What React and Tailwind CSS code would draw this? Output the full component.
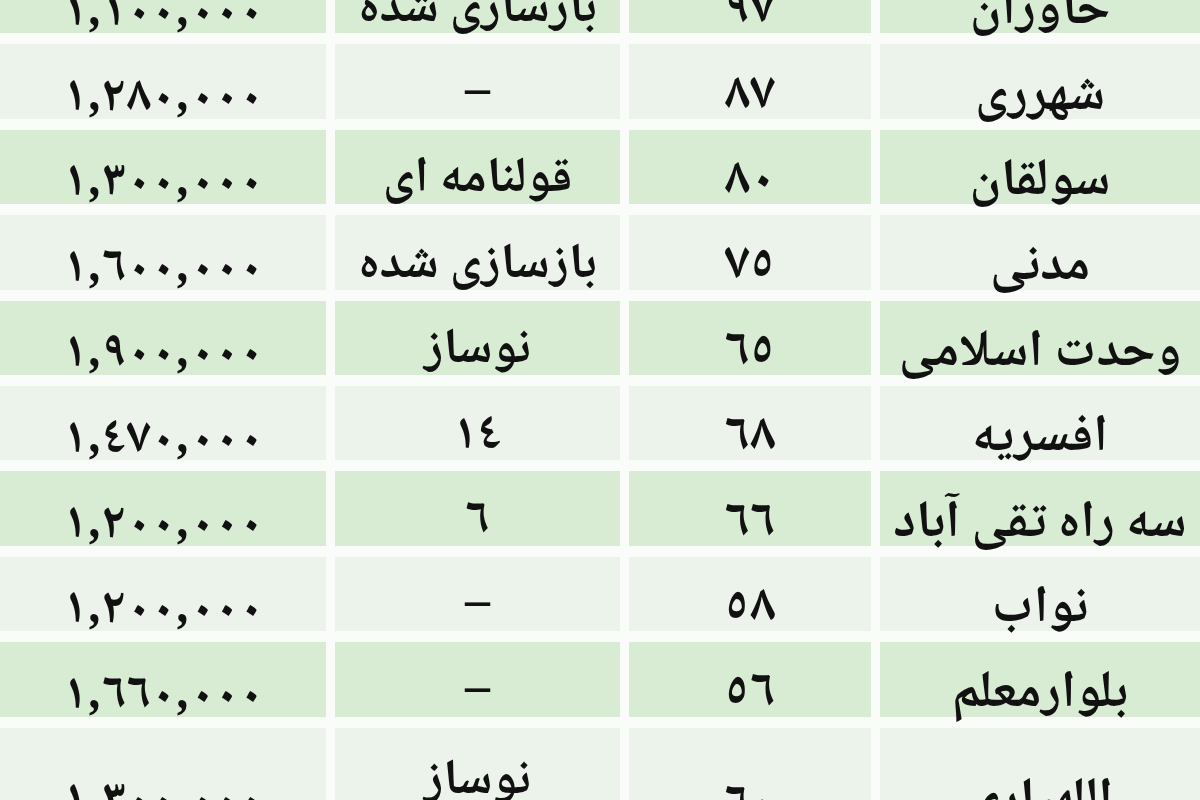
import React from "react";

const rows = [
  ["١,١٠٠,٠٠٠", "بازسازی شده", "٩٧", "خاوران"],
  ["١,٢٨٠,٠٠٠", "–", "٨٧", "شهرری"],
  ["١,٣٠٠,٠٠٠", "قولنامه ای", "٨٠", "سولقان"],
  ["١,٦٠٠,٠٠٠", "بازسازی شده", "٧٥", "مدنی"],
  ["١,٩٠٠,٠٠٠", "نوساز", "٦٥", "وحدت اسلامی"],
  ["١,٤٧٠,٠٠٠", "١٤", "٦٨", "افسریه"],
  ["١,٢٠٠,٠٠٠", "٦", "٦٦", "سه راه تقی آباد"],
  ["١,٢٠٠,٠٠٠", "–", "٥٨", "نواب"],
  ["١,٦٦٠,٠٠٠", "–", "٥٦", "بلوارمعلم"],
];

function Cell({ children, green, w, dir = "rtl" }) {
  return (
    <div
      dir={dir}
      className={`${w} h-full shrink-0 flex items-center justify-center whitespace-nowrap ${
        green ? "bg-[#d8ecd4]" : "bg-[#ecf3eb]"
      }`}
    >
      {children}
    </div>
  );
}

export default function App() {
  return (
    <div
      className="w-[1200px] h-[800px] overflow-hidden bg-[#fafcf9] text-[#111111] font-bold"
      style={{ fontFamily: '"Noto Naskh Arabic", "Noto Sans Arabic", "DejaVu Sans", sans-serif' }}
    >
      <div className="-mt-[41px] flex flex-col gap-[11px]">
        {rows.map((r, i) => {
          const green = i % 2 === 0;
          return (
            <div key={i} className="flex gap-[9px] h-[74.4px]">
              <Cell green={green} w="w-[326px]" dir="ltr">
                <span className="text-[50px] tracking-[8px] translate-y-[18px]">{r[0]}</span>
              </Cell>
              <Cell green={green} w="w-[285px]">
                <span className="text-[50px] translate-y-[14px]">{r[1]}</span>
              </Cell>
              <Cell green={green} w="w-[242px]" dir="ltr">
                <span className="text-[52px] translate-y-[15px]">{r[2]}</span>
              </Cell>
              <Cell green={green} w="w-[320px]">
                <span className="text-[52px] translate-y-[16px]">{r[3]}</span>
              </Cell>
            </div>
          );
        })}
        <div className="flex gap-[9px] h-[160px]">
          <Cell green={false} w="w-[326px]" dir="ltr">
            <span className="text-[50px] tracking-[8px] -translate-y-[4px]">١,٣٠٠,٠٠٠</span>
          </Cell>
          <Cell green={false} w="w-[285px]">
            <div className="flex flex-col items-center text-[50px] leading-[62px] translate-y-[6px]">
              <span>نوساز</span>
              <span>(١٠ ساله)</span>
            </div>
          </Cell>
          <Cell green={false} w="w-[242px]" dir="ltr">
            <span className="text-[52px] -translate-y-[2px]">٦٠</span>
          </Cell>
          <Cell green={false} w="w-[320px]">
            <span className="text-[52px] -translate-y-[6px]">اللهیاری</span>
          </Cell>
        </div>
      </div>
    </div>
  );
}
